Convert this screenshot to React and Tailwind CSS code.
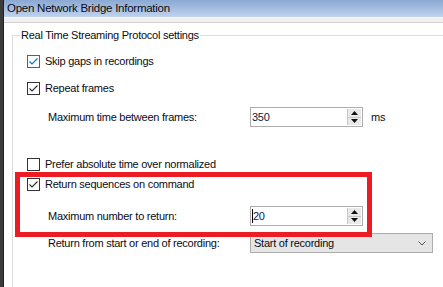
import React from 'react';

function CheckBox({ checked, focused }) {
  return (
    <div
      className={`w-[13px] h-[13px] shrink-0 border bg-white flex items-center justify-center ${
        focused ? 'border-[#0078d7]' : 'border-[#333333]'
      }`}
    >
      {checked && (
        <svg width="11" height="11" viewBox="0 0 11 11">
          <polyline
            points="1.5,5.5 4,8 9.5,2.5"
            fill="none"
            stroke={focused ? '#0078d7' : '#333333'}
            strokeWidth="1.2"
          />
        </svg>
      )}
    </div>
  );
}

function CheckRow({ label, checked, focused, className = '' }) {
  return (
    <div className={`h-[20px] flex items-center gap-[5px] ${className}`}>
      <CheckBox checked={checked} focused={focused} />
      <span>{label}</span>
    </div>
  );
}

function Spinner() {
  return (
    <div className="w-[14px] h-full flex flex-col border-l border-[#c8c8c8]">
      <div className="flex-1 bg-[#e9e9e9] border-b border-[#c8c8c8] flex items-center justify-center">
        <svg width="7" height="4" viewBox="0 0 7 4">
          <polygon points="0,4 7,4 3.5,0" fill="#111" />
        </svg>
      </div>
      <div className="flex-1 bg-[#e9e9e9] flex items-center justify-center">
        <svg width="7" height="4" viewBox="0 0 7 4">
          <polygon points="0,0 7,0 3.5,4" fill="#111" />
        </svg>
      </div>
    </div>
  );
}

function NumberBox({ value, caret }) {
  return (
    <div className="w-[113px] h-[20px] border border-[#adadad] bg-white flex items-stretch">
      <div className="flex-1 flex items-center pl-[1px] text-[#0a1a40]">
        {caret && <span className="w-px h-[14px] bg-black" />}
        <span>{value}</span>
      </div>
      <div className="py-px pr-px">
        <Spinner />
      </div>
    </div>
  );
}

export default function App() {
  return (
    <div
      className="relative w-[443px] h-[287px] overflow-hidden bg-white flex text-[11px] tracking-[-0.25px] text-[#0b0b14]"
      style={{ fontFamily: '"Liberation Sans", Arial, sans-serif' }}
    >
      {/* dark edge */}
      <div className="w-[4px] bg-[#3b3b3b] border-r border-[#1f1f1f]" />

      <div className="flex-1 flex flex-col">
        {/* title bar */}
        <div className="h-[17px] bg-gradient-to-b from-[#8aa8d2] to-[#bfd3ee] pl-[3px] flex items-center text-[11.5px]">
          Open Network Bridge Information
        </div>
        <div className="h-[5px] bg-[#f0f0f0] border-t border-[#f6fbf4]" />
        <div className="h-px bg-[#d2d2d2]" />

        {/* group box */}
        <div className="relative ml-[8px] mt-[12px] flex-1 border-l border-t border-[#dcdcdc] pl-[14px]">
          <div className="absolute -top-[8px] left-[7px] bg-white px-px leading-[14px]">
            Real Time Streaming Protocol settings
          </div>

          <CheckRow className="mt-[15px]" label="Skip gaps in recordings" checked focused />
          <CheckRow className="mt-[7px]" label="Repeat frames" checked />

          <div className="mt-[9px] h-[20px] flex items-center pl-[21px]">
            <span className="w-[202px]">Maximum time between frames:</span>
            <NumberBox value="350" />
            <span className="ml-[8px]">ms</span>
          </div>

          <CheckRow className="mt-[27px]" label="Prefer absolute time over normalized" />
          <CheckRow label="Return sequences on command" checked />

          <div className="mt-[12px] h-[20px] flex items-center pl-[21px]">
            <span className="w-[202px]">Maximum number to return:</span>
            <NumberBox value="20" caret />
          </div>

          <div className="mt-[7px] h-[20px] flex items-center pl-[21px]">
            <span className="w-[202px]">Return from start or end of recording:</span>
            <div className="w-[183px] h-[20px] border border-[#acacac] bg-[#e5e5e5] flex items-center pl-[3px] pr-[6px]">
              <span className="flex-1">Start of recording</span>
              <svg width="8" height="5" viewBox="0 0 8 5">
                <polyline points="0.5,0.5 4,4 7.5,0.5" fill="none" stroke="#555" strokeWidth="1" />
              </svg>
            </div>
          </div>
        </div>
      </div>

      {/* red annotation */}
      <div className="absolute left-[15px] top-[172px] w-[357px] h-[65px] border-[5px] border-[#ed1c24] pointer-events-none" />
    </div>
  );
}
